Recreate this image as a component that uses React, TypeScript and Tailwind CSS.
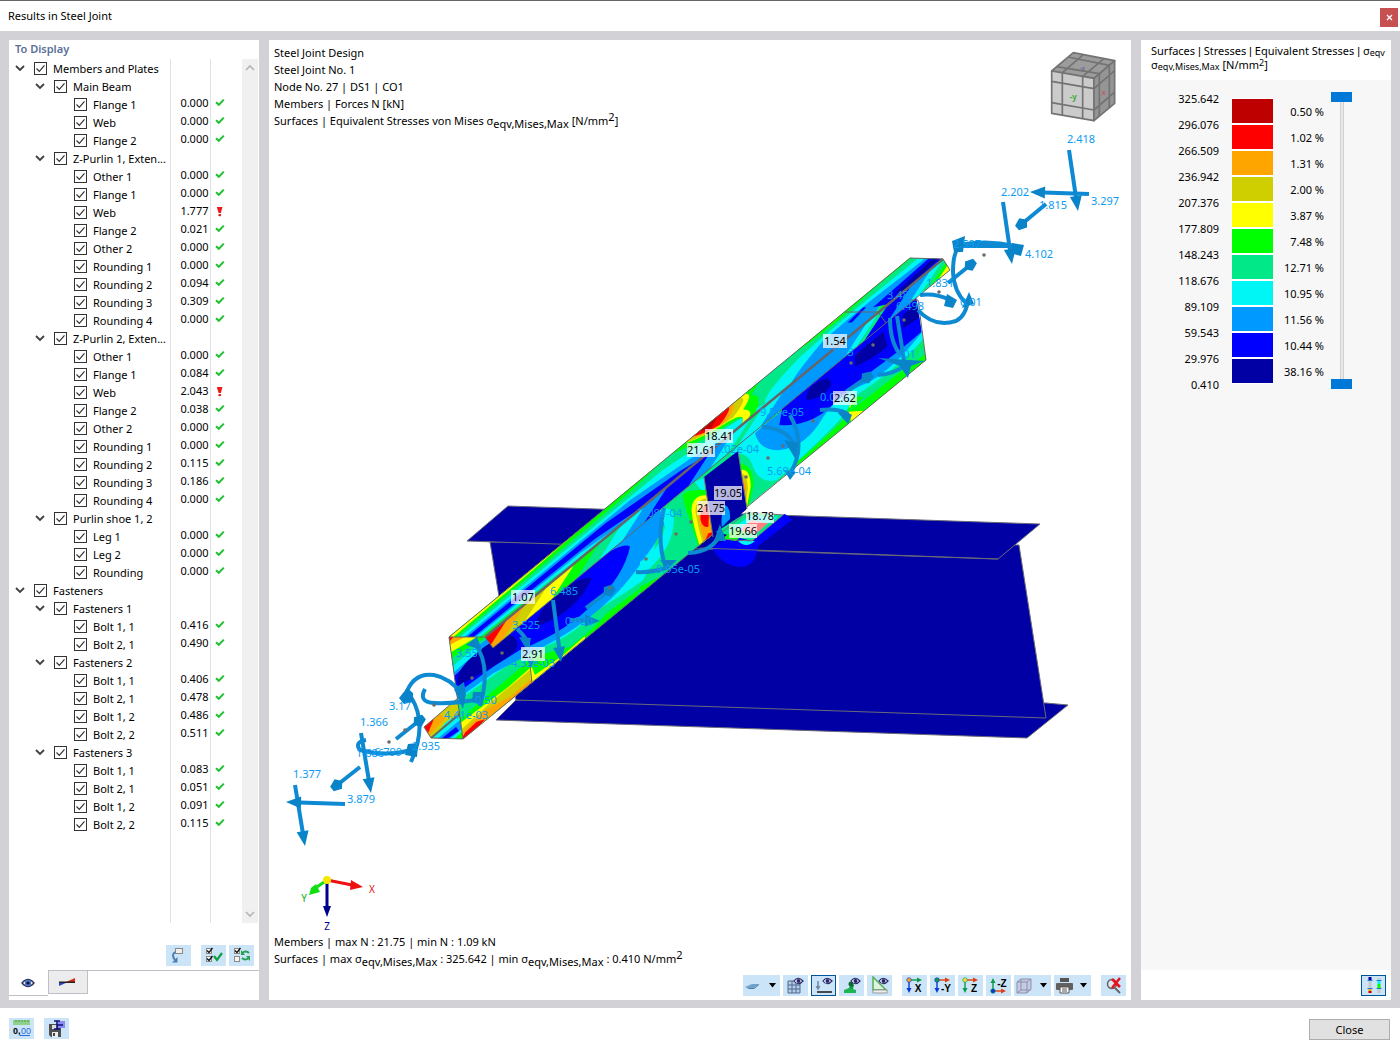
import React from 'react';

type Row = { level: 0 | 1 | 2; label: string; value?: string; bad?: boolean };

const group = (level: 0 | 1, label: string): Row => ({ level, label });
const leaf = (label: string, value: string, bad = false): Row => ({ level: 2, label, value, bad });

const rows: Row[] = [
  group(0, 'Members and Plates'),
  group(1, 'Main Beam'),
  leaf('Flange 1', '0.000'), leaf('Web', '0.000'), leaf('Flange 2', '0.000'),
  group(1, 'Z-Purlin 1, Exten...'),
  leaf('Other 1', '0.000'), leaf('Flange 1', '0.000'), leaf('Web', '1.777', true), leaf('Flange 2', '0.021'),
  leaf('Other 2', '0.000'), leaf('Rounding 1', '0.000'), leaf('Rounding 2', '0.094'), leaf('Rounding 3', '0.309'),
  leaf('Rounding 4', '0.000'),
  group(1, 'Z-Purlin 2, Exten...'),
  leaf('Other 1', '0.000'), leaf('Flange 1', '0.084'), leaf('Web', '2.043', true), leaf('Flange 2', '0.038'),
  leaf('Other 2', '0.000'), leaf('Rounding 1', '0.000'), leaf('Rounding 2', '0.115'), leaf('Rounding 3', '0.186'),
  leaf('Rounding 4', '0.000'),
  group(1, 'Purlin shoe 1, 2'),
  leaf('Leg 1', '0.000'), leaf('Leg 2', '0.000'), leaf('Rounding', '0.000'),
  group(0, 'Fasteners'),
  group(1, 'Fasteners 1'),
  leaf('Bolt 1, 1', '0.416'), leaf('Bolt 2, 1', '0.490'),
  group(1, 'Fasteners 2'),
  leaf('Bolt 1, 1', '0.406'), leaf('Bolt 2, 1', '0.478'), leaf('Bolt 1, 2', '0.486'), leaf('Bolt 2, 2', '0.511'),
  group(1, 'Fasteners 3'),
  leaf('Bolt 1, 1', '0.083'), leaf('Bolt 2, 1', '0.051'), leaf('Bolt 1, 2', '0.091'), leaf('Bolt 2, 2', '0.115'),
];

const indent = ['pl-1', 'pl-6', 'pl-11'];

const NAVY = '#0000a5';
const ROYAL = '#0000ff';
const BLUE = '#0099ff';
const CYAN = '#00f5f5';
const TEAL = '#00e887';
const GREEN = '#00ff00';
const YELLOW = '#ffff00';
const OCHRE = '#cfcf00';
const ORANGE = '#ffa500';
const RED = '#ff0000';
const DARKRED = '#bf0000';

const legend = [
  { color: DARKRED, share: '0.50 %' },
  { color: RED, share: '1.02 %' },
  { color: ORANGE, share: '1.31 %' },
  { color: OCHRE, share: '2.00 %' },
  { color: YELLOW, share: '3.87 %' },
  { color: GREEN, share: '7.48 %' },
  { color: TEAL, share: '12.71 %' },
  { color: CYAN, share: '10.95 %' },
  { color: BLUE, share: '11.56 %' },
  { color: ROYAL, share: '10.44 %' },
  { color: NAVY, share: '38.16 %' },
];
const limits = ['325.642', '296.076', '266.509', '236.942', '207.376', '177.809', '148.243', '118.676', '89.109', '59.543', '29.976', '0.410'];

function Tree() {
  return (
    <table className="w-full table-fixed border-collapse text-[11px] leading-[18px]">
      <colgroup>
        <col className="w-[161px]" />
        <col className="w-10" />
        <col />
      </colgroup>
      <tbody>
        {rows.map((r, i) => (
          <tr key={i} className="h-[18px]">
            <td className="border-r border-[#e3e3e6] p-0">
              <div className={'flex h-[18px] items-center ' + indent[r.level]}>
                <span className="flex w-[21px] shrink-0">
                  {r.level < 2 && (
                    <button aria-label={'Collapse ' + r.label} className="flex h-4 w-[14px] items-center justify-center">
                      <svg width="10" height="7" viewBox="0 0 10 7"><path d="M1 1l4 4 4-4" fill="none" stroke="#404040" strokeWidth="1.8" /></svg>
                    </button>
                  )}
                </span>
                <label className="flex items-center whitespace-nowrap">
                  <span className="relative flex h-[13px] w-[13px] shrink-0">
                    <input type="checkbox" defaultChecked className="peer h-[13px] w-[13px] appearance-none border border-[#333] bg-white" />
                    <svg className="pointer-events-none absolute inset-0 hidden peer-checked:block" width="13" height="13" viewBox="0 0 13 13">
                      <path d="M2.5 6.5l2.8 2.8 5.2-6" fill="none" stroke="#333" strokeWidth="1.2" />
                    </svg>
                  </span>
                  <span className="pl-1.5 pt-px">{r.label}</span>
                </label>
              </div>
            </td>
            <td className="border-r border-[#e3e3e6] p-0">
              <div className="h-[18px] pr-px text-right leading-4">{r.value}</div>
            </td>
            <td className="p-0">
              {r.value && (
                <div className="flex h-[18px] pl-1 pt-[3px]">
                  {r.bad ? (
                    <svg width="9" height="11" viewBox="0 0 9 11"><path d="M1.8 1h5.6L5.9 7H3.6z" fill="#f01818" /><rect x="3.3" y="8" width="2.8" height="2.2" rx="1" fill="#f01818" /></svg>
                  ) : (
                    <svg width="10" height="9" viewBox="0 0 10 9"><path d="M1 4.2l2.8 2.6L8.8 1.6" fill="none" stroke="#22c032" strokeWidth="2" /></svg>
                  )}
                </div>
              )}
            </td>
          </tr>
        ))}
        <tr className="h-[90px]">
          <td className="border-r border-[#e3e3e6]" />
          <td className="border-r border-[#e3e3e6]" />
          <td />
        </tr>
      </tbody>
    </table>
  );
}

const ARROW = '#0d8ad2';

/* Load arrow: a shaft from (x1,y1) with a cone whose tip is at (x2,y2). */
function Arrow({ x1, y1, x2, y2, blunt = false }: { x1: number; y1: number; x2: number; y2: number; blunt?: boolean }) {
  const d = Math.hypot(x2 - x1, y2 - y1);
  const ux = (x2 - x1) / d;
  const uy = (y2 - y1) / d;
  const h = blunt ? 13 : 15;
  const w = 6;
  const bx = x2 - ux * h;
  const by = y2 - uy * h;
  const cone = blunt
    ? `${bx},${by} ${bx + ux * 5 - uy * w},${by + uy * 5 + ux * w} ${x2 - uy * 3},${y2 + ux * 3} ${x2 + uy * 3},${y2 - ux * 3} ${bx + ux * 5 + uy * w},${by + uy * 5 - ux * w}`
    : `${bx - uy * w},${by + ux * w} ${x2},${y2} ${bx + uy * w},${by - ux * w}`;
  return (
    <g>
      <line x1={x1} y1={y1} x2={bx + ux * 2} y2={by + uy * 2} stroke={ARROW} strokeWidth="4" />
      <polygon points={cone} fill="#0a84c8" />
    </g>
  );
}

const forceLabels: [number, number, string][] = [
  [1067, 143, '2.418'], [1001, 196, '2.202'], [1091, 205, '3.297'], [1039, 209, '1.815'], [1025, 258, '4.102'],
  [953, 248, '2.597'], [926, 287, '1.831'], [887, 299, '3.48'], [896, 310, '6.498'], [960, 306, '0.01'],
  [894, 358, '2.01'], [832, 356, '1.03'], [820, 401, '0.020'], [760, 416, '9.54e-05'], [715, 453, '7.02e-04'],
  [767, 475, '5.69e-04'], [638, 517, '7.08e-04'], [656, 573, '9.95e-05'], [550, 595, '6.485'], [565, 625, '0.020'],
  [512, 629, '3.525'], [511, 667, '4.32e-03'], [456, 657, '3.55'], [475, 704, '0.50'], [444, 719, '4.41e-03'],
  [389, 710, '3.17'], [360, 726, '1.366'], [356, 757, '1.686'], [374, 756, '6.799'], [412, 750, '2.935'],
  [293, 778, '1.377'], [347, 803, '3.879'],
];

const valueLabels: [number, number, string][] = [
  [835, 341, '1.54'], [845, 398, '2.62'], [719, 436, '18.41'], [701, 450, '21.61'], [728, 493, '19.05'],
  [711, 508, '21.75'], [760, 516, '18.78'], [743, 531, '19.66'], [523, 597, '1.07'], [533, 654, '2.91'],
];

const nodes: [number, number][] = [
  [984, 255], [939, 292], [904, 320], [873, 345], [851, 363], [813, 421], [783, 446], [768, 458], [746, 477],
  [691, 522], [676, 534], [646, 559], [610, 588], [502, 653], [472, 678], [434, 705], [405, 730], [389, 742],
];

/* Segments of the upper lip, from the lower-left end to the upper-right end. */
const lipBands: [number, number, string][] = [
  [485, 508, RED], [508, 526, ORANGE], [526, 548, OCHRE], [548, 576, YELLOW], [576, 600, GREEN], [600, 622, TEAL],
  [622, 646, CYAN], [646, 668, BLUE], [668, 712, ROYAL], [712, 734, BLUE], [734, 752, CYAN], [752, 762, TEAL],
  [762, 784, CYAN], [784, 868, BLUE], [868, 880, CYAN], [880, 888, TEAL], [888, 912, ROYAL], [912, 932, BLUE],
  [932, 944, CYAN], [944, 954, TEAL], [954, 962, GREEN], [962, 990, YELLOW],
];

function Lip() {
  const top = (x: number) => 637 - ((x - 485) * 378) / 458;
  const low = (x: number) => 648 - ((x - 493) * 378) / 457;
  return (
    <g clipPath="url(#lip)">
      {lipBands.map(([a, b, c], i) => (
        <polygon key={i} fill={c} points={`${a},${top(a)} ${b + 1},${top(b + 1)} ${b - 23},${low(b - 23)} ${a - 24},${low(a - 24)}`} />
      ))}
    </g>
  );
}

function Model() {
  return (
    <svg className="absolute inset-0 h-full w-full" viewBox="269 40 862 960" role="img" aria-label="Stress distribution of the steel joint">
      <defs>
        <clipPath id="web"><polygon points="449,637 910,258 926,360 463,739" /></clipPath>
        <clipPath id="flange"><polygon points="449,637 485,637 943,259 910,258" /></clipPath>
        <clipPath id="lip"><polygon points="485,637 493,648 950,270 943,259" /></clipPath>
        <clipPath id="foot"><polygon points="424,727 458,698 463,739 431,738" /></clipPath>
      </defs>

      {/* main beam */}
      <g fill={NAVY} stroke="#6a6a78" strokeWidth="1">
        <polygon points="516,700 1046,703 1068,705 1027,738 496,720" />
        <polygon points="490,542 1019,545 1046,718 516,700" />
        <polygon points="508,506 1040,524 998,559 467,541" />
      </g>
      <path d="M712 548Q722 566 741 567Q756 566 758 546L792 520L785 514L740 530z" fill={ROYAL} />
      <line x1="700" y1="548" x2="998" y2="559" stroke="#6a6a78" />

      {/* lower flange end of the purlin */}
      <g clipPath="url(#foot)">
        <rect x="420" y="695" width="50" height="50" fill={OCHRE} />
        <polygon points="424,727 440,714 446,718 430,735" fill={ORANGE} />
        <polygon points="424,727 434,719 428,733" fill={RED} />
        <polygon points="432,739 446,722 459,714 463,739" fill={CYAN} />
        <polygon points="437,739 460,720 463,728 450,739" fill={BLUE} />
        <polygon points="441,739 456,727 459,731 447,739" fill={ROYAL} />
        <polygon points="454,739 463,731 463,739" fill={GREEN} />
        <line x1="431" y1="738" x2="462" y2="712" stroke="#666" strokeWidth="2" />
      </g>
      <polygon points="458,698 424,727 431,738 463,739" fill="none" stroke="#666" />

      {/* purlin web */}
      <g clipPath="url(#web)">
        <rect x="440" y="250" width="500" height="500" fill={TEAL} />
        <g transform="translate(410 480) scale(.33333)">
          <path fill={CYAN} d="M110 690L370 512Q480 480 560 390Q640 345 700 300Q735 240 735 190L760 80L600 100L110 500z" />
          <path fill={TEAL} d="M105 720L370 525L365 505L105 690z" />
          <path fill={GREEN} d="M150 717L370 530L480 500Q560 440 590 400L700 318L640 400L150 800z" />
          <path fill={YELLOW} d="M150 730L290 625L365 560L375 585L460 525L525 468L525 500L150 800z" />
          <path fill={OCHRE} d="M150 752L250 660L360 570L365 630L150 800z" />
          <path fill={ORANGE} d="M150 765L225 690L300 650L366 595L366 640L150 800z" />
          <path fill={RED} d="M150 785L165 758L200 725L225 718L160 790z" />
          <path fill={BLUE} d="M120 672L250 580L400 500Q520 440 620 340Q705 250 742 160Q745 110 690 120L450 300L120 560z" />
          <path fill={ROYAL} d="M120 655L250 560L330 510Q480 450 560 360Q640 290 660 200Q640 185 560 240L250 480L130 590z" />
          <path fill={NAVY} d="M145 615Q230 575 315 515Q335 475 300 465Q240 480 200 520Q130 575 145 615z" />
          <path fill={NAVY} d="M375 440Q500 400 545 295Q500 290 440 345Q385 390 375 440z" />
          <path fill={TEAL} d="M110 471H240L200 500L125 560z" />
          <path fill={CYAN} d="M125 560L205 495L215 505L130 578z" />
          <path fill={GREEN} d="M110 471H230L180 500L123 535z" />
          <path fill={YELLOW} d="M115 471H200L120 518z" />
          <path fill={ORANGE} d="M115 471H165L118 495z" />
          <path fill={RED} d="M115 471H130L118 485z" />
        </g>
        <g transform="translate(640 380) scale(.33333)">
          <path fill={BLUE} d="M0 400L60 385Q85 410 70 440Q40 510 0 545z" />
          <path fill={CYAN} d="M60 390Q110 370 100 440Q90 520 0 590L0 545Q60 510 75 440z" />
          <path fill={GREEN} d="M0 620L40 600L60 590L0 650z" />
          <path fill={CYAN} d="M165 305L200 290L195 330Q180 335 165 305z" />
          <path fill={GREEN} d="M180 330Q130 330 128 350Q140 400 160 450L175 500L225 480L215 330z" />
          <path fill={YELLOW} d="M195 345Q152 350 155 395Q160 440 180 500L225 480L215 360z" />
          <path fill={OCHRE} d="M198 355Q162 362 167 400Q175 450 190 495L225 475z" />
          <path fill={ORANGE} d="M200 365Q172 370 176 410Q182 455 195 490L225 475z" />
          <path fill={RED} d="M200 375Q178 380 182 420Q188 445 205 440L208 375z" />
          <path fill={RED} d="M196 480L205 460L225 455L225 475z" />
        </g>
        <g transform="translate(680 250) scale(.33333)">
          <path fill={GREEN} d="M340 645Q430 570 500 500L500 445L545 440Q560 450 600 410Q680 350 738 270V360L340 680z" />
          <path fill={TEAL} d="M500 490Q540 450 600 400Q690 340 738 275V310Q640 380 540 460z" />
          <path fill={YELLOW} d="M505 485L550 482L515 520zM498 450L520 445L510 475z" />
          <path fill={CYAN} d="M150 615Q200 600 215 640Q235 705 290 690Q380 610 450 540Q510 480 520 440Q640 370 735 262L715 200L200 560z" />
          <path fill={BLUE} d="M225 550Q240 605 300 600Q380 590 430 500Q480 430 560 400Q640 360 735 235L715 190L270 510z" />
          <path fill={ROYAL} d="M298 525Q380 530 440 480Q520 410 580 360Q650 310 725 245L712 140L620 200L310 455z" />
          <path fill={NAVY} d="M525 315L610 245L622 290Q580 325 525 350zM380 452Q375 405 440 385Q475 400 420 440zM668 195L710 160L716 205L670 235z" />
          <path fill={GREEN} d="M180 640Q225 650 220 710L205 775L180 790z" />
          <path fill={YELLOW} d="M180 660Q212 655 212 710L200 775L180 790z" />
          <path fill={OCHRE} d="M180 672Q202 665 204 715L196 772L180 780z" />
          <path fill={ORANGE} d="M180 685Q195 680 198 715L193 765z" />
          <path fill={RED} d="M182 700L190 705L192 745L188 755z" />
        </g>
      </g>

      {/* purlin shoe */}
      <polygon points="704,477 738,451 747,509 713,537" fill={NAVY} />
      <path d="M725 505q6 3 5 14l-8 8q-2-10 3-22z" fill={BLUE} />
      <line x1="704" y1="477" x2="713" y2="537" stroke="#777" />
      <line x1="738" y1="451" x2="747" y2="509" stroke="#777" />
      <polygon points="716,532 747,512 783,515 752,541" fill={TEAL} />
      <polygon points="728,532 750,516 778,517 758,530" fill={CYAN} />
      <polygon points="738,530 752,520 768,523 756,534" fill="#ff8080" />
      <polygon points="722,539 735,528 745,532 736,541" fill={GREEN} />
      <path d="M738 541Q746 549 755 541z" fill={CYAN} />
      <path d="M716 537L747 512L783 515L752 541L720 539" fill="none" stroke="#777" />

      {/* purlin top flange, drawn in along/across coordinates */}
      <g clipPath="url(#flange)">
        <g transform="matrix(4.61 -3.79 .35 0 449 637)">
          <rect x="-8" y="-5" width="116" height="115" fill={TEAL} />
          <polygon fill={GREEN} points="-8,-5 50,-5 38,14 -8,24" />
          <polygon fill={YELLOW} points="-8,-5 36,-5 18,7 -8,15" />
          <polygon fill={ORANGE} points="-8,-5 2,-5 -2,14 -8,14" />
          <polygon fill={CYAN} points="-8,32 44,30 56,68 64,100 -8,105" />
          <polygon fill={BLUE} points="-8,44 36,42 47,70 54,105 -8,90" />
          <polygon fill={CYAN} points="-8,74 22,84 32,105 -8,105" />
          <polygon fill={ROYAL} points="-8,52 30,52 44,84 48,105 36,105 26,76 -8,68" />
          <polygon fill={TEAL} points="-8,84 16,92 22,105 -8,105" />
          <polygon fill={GREEN} points="-8,90 12,96 16,105 -8,105" />
          <polygon fill={YELLOW} points="-8,96 8,100 8,105 -8,105" />

          <path fill={GREEN} d="M48-5H68Q66 10 64 20Q64 60 58 105H55Q60 70 56 60Q50 30 48-5z" />
          <path fill={YELLOW} d="M51-5H64Q65 20 60 50Q60 90 56 105H55Q60 70 57 50Q52 30 51-5z" />
          <path fill={OCHRE} d="M51-5H63Q64 20 58 48Q53 40 51-5z" />
          <path fill={ORANGE} d="M52-5H62Q61 20 57 42Q53 30 52-5z" />
          <path fill={RED} d="M53-5H61Q60 18 56 36Q53 20 53-5z" />
          <path fill={DARKRED} d="M54-5H59Q57 10 55 24z" />

          <path fill={CYAN} d="M61 105Q62 60 74 30Q84 18 100 25L108 36V105z" />
          <path fill={BLUE} d="M66 105Q68 80 78 40Q86 30 96 42L108 50V105z" />
          <path fill={GREEN} d="M74-5H106V5L92 4Q86 14 80 10Q76 8 74-5z" />
          <path fill={YELLOW} d="M80-5H86Q84 10 80-5z" />
          <polygon fill={ROYAL} points="83,46 87,38 87,46 83,58" />
          <polygon fill={TEAL} points="84,104 88,72 89,80 86,105" />
          <polygon fill={GREEN} points="85,104 88,80 89,84 86,105" />
          <path fill={ROYAL} d="M87 66L108 48V105H88z" />
          <polygon fill={NAVY} points="90,80 104,62 104,78 92,98" />
        </g>
      </g>
      <Lip />
      <g fill="none" stroke="#666">
        <polyline points="449,637 910,258 943,259 950,270" />
        <path d="M449 637H485L493 648M910 300L918 300L926 360L747 507M713 534L463 739L449 637M493 648L950 270M845 312H878L886 323M530 665L532 683" />
        <path d="M485 637L943 259" strokeWidth="2.5" />
      </g>

      {/* moments and forces */}
      <g fill="none" stroke={ARROW} strokeWidth="4">
        <path d="M405 697Q412 672 434 675Q450 678 462 694" />
        <path d="M425 689Q418 702 434 703Q455 704 480 699" />
        <path d="M411 697Q428 724 411 762" />
        <path d="M366 740Q354 742 360 750Q385 757 412 750" />
        <path d="M1015 246Q990 240 965 244Q953 245 953 272Q954 292 966 303" />
        <path d="M962 246L1012 246" />
        <path d="M920 295Q936 293 950 300M918 310Q934 328 956 321Q966 316 968 300" />
        <path d="M890 318Q890 342 900 354M897 316L904 360M878 375Q894 374 904 366" />
        <path d="M762 427Q788 428 795 447M790 415Q807 446 790 474M820 410Q838 408 848 414" />
        <path d="M664 508Q656 540 666 568Q650 573 636 572M688 553Q714 552 721 532" />
        <path d="M474 643Q492 664 480 706M517 629Q527 637 529 648" />
      </g>
      <g fill="#0a84c8">
        <polygon points="399,698 407,688 413,693 413,702 404,704" />
        <polygon points="454,689 464,682 466,694 463,709" />
        <polygon points="473,692 485,692 481,705 472,702" />
        <polygon points="408,744 418,743 417,757 405,755" />
        <polygon points="952,241 965,236 963,252 954,252" />
        <polygon points="947,294 957,300 953,308 944,306" />
        <polygon points="969,292 974,304 962,308" />
        <polygon points="878,358 925,361 911,366 908,378 900,366" />
        <polygon points="784,440 798,443 796,460" />
        <polygon points="842,409 852,415 848,424 838,413" />
        <polygon points="660,560 677,560 668,569" />
        <polygon points="714,541 720,524 726,541" />
        <polygon points="466,645 477,637 482,650" />
        <polygon points="519,637 531,638 528,652" />
        <polygon points="784,470 796,472 790,480" />
        <polygon points="1012,243 1024,245 1021,256 1010,253" />
        <polygon points="531,668 525,654 534,660" />
      </g>
      <Arrow x1={1069} y1={150} x2={1078} y2={211} />
      <Arrow x1={1089} y1={194} x2={1030} y2={192} />
      <Arrow x1={1003} y1={202} x2={1012} y2={264} />
      <Arrow x1={1046} y1={204} x2={1017} y2={228} blunt />
      <Arrow x1={948} y1={283} x2={975} y2={261} blunt />
      <Arrow x1={846} y1={392} x2={872} y2={374} blunt />
      <Arrow x1={553} y1={600} x2={561} y2={662} />
      <Arrow x1={586} y1={608} x2={614} y2={587} blunt />
      <Arrow x1={570} y1={620} x2={600} y2={621} />
      <Arrow x1={396} y1={739} x2={424} y2={717} blunt />
      <Arrow x1={361} y1={733} x2={371} y2={793} />
      <Arrow x1={360} y1={767} x2={332} y2={789} blunt />
      <Arrow x1={295} y1={785} x2={305} y2={846} />
      <Arrow x1={345} y1={804} x2={286} y2={802} />

      {nodes.map(([x, y]) => <circle key={x} cx={x} cy={y} r="1.8" fill="#6b6b6b" />)}
      <g fill="#0c9bf2" className="text-[11px]">
        {forceLabels.map(([x, y, t]) => <text key={x + '-' + y} x={x} y={y}>{t}</text>)}
      </g>
      <g className="text-[11px]" textAnchor="middle">
        {valueLabels.map(([x, y, t]) => (
          <g key={t}>
            <rect x={x - (t.length > 4 ? 14 : 12)} y={y - 7} width={t.length > 4 ? 28 : 24} height="14" fill="#fff" fillOpacity=".72" />
            <text x={x} y={y + 4}>{t}</text>
          </g>
        ))}
      </g>

      {/* coordinate axes */}
      <line x1="327" y1="880" x2="352" y2="885" stroke="#ee1010" strokeWidth="3" />
      <polygon points="351,880 363,887 350,890" fill="#ee1010" />
      <line x1="327" y1="880" x2="317" y2="887" stroke="#10e010" strokeWidth="3" />
      <polygon points="316,884 320,892 309,895 311,888" fill="#10e010" />
      <line x1="327" y1="880" x2="327" y2="908" stroke="#00008c" strokeWidth="3" />
      <polygon points="323,906 331,906 327,917" fill="#00008c" />
      <circle cx="327" cy="880" r="4" fill="#f3ea00" />
      <g className="text-[10px]" textAnchor="middle">
        <text x="372" y="893" fill="#e01010">X</text>
        <text x="304" y="902" fill="#10b010">Y</text>
        <text x="327" y="930" fill="#00008c">Z</text>
      </g>

      {/* view cube */}
      <g transform="translate(1020 40) scale(.33333)" stroke="#737373" strokeWidth="5" strokeLinejoin="round">
        <polygon points="95,93 160,38 284,62 222,115" fill="#9c9c9c" />
        <polygon points="95,93 222,115 222,242 95,220" fill="#cbcbcb" />
        <polygon points="222,115 284,62 284,190 222,242" fill="#959595" />
        <path d="M127 98V226M188 109V236M95 124L222 146L284 92M95 188L222 210L284 156M238 101V229M268 76V204M110 80L238 101M144 51L268 76M127 98L190 44M188 109L252 56" fill="none" />
        <g stroke="none" textAnchor="middle" fontWeight="bold">
          <text x="160" y="180" fill="#3fae3f" fontSize="24">-y</text>
          <text x="187" y="90" fill="#6868a0" fontSize="18">-z</text>
          <text x="251" y="164" fill="#c06060" fontSize="20">x</text>
        </g>
      </g>
    </svg>
  );
}

function Eye({ x = 0, y = 0 }: { x?: number; y?: number }) {
  return (
    <g transform={`translate(${x} ${y})`}>
      <path d="M0 4Q4-1.500 9 4Q4 9.500 0 4z" fill="#fff" stroke="#27276b" strokeWidth="1.2" />
      <circle cx="4.500" cy="4" r="2" fill="#27276b" />
    </g>
  );
}

function Caret() {
  return <svg width="7" height="5" viewBox="0 0 7 5"><path d="M0 0h7L3.500 4.500z" fill="#000" /></svg>;
}

function Tool({ label, active, wide, children }: { label: string; active?: boolean; wide?: boolean; children: React.ReactNode }) {
  return (
    <button
      aria-label={label}
      className={
        'flex h-[21px] items-center bg-[#cce4f7] ' +
        (wide ? 'w-[37px] justify-between pl-0.5 pr-1 ' : 'w-[25px] justify-center ') +
        (active ? 'border border-[#005499]' : '')
      }
    >
      <svg width="20" height="19" viewBox="0 0 20 19" className="shrink-0">{children}</svg>
      {wide && <Caret />}
    </button>
  );
}

function AxisIcon({ letter, up, dot, h, v }: { letter: string; up?: boolean; dot: string; h: string; v: string }) {
  const y = up ? 15 : 4;
  return (
    <g>
      <path d={`M4 ${y}H13`} stroke={h} strokeWidth="1.4" />
      <path d={`M12 ${y - 2.5}l5 2.5-5 2.5z`} fill={h} />
      <path d={up ? 'M4 15V6' : 'M4 4v9'} stroke={v} strokeWidth="1.4" />
      <path d={up ? 'M1.500 7L4 2l2.500 5z' : 'M1.500 12L4 17l2.500-5z'} fill={v} />
      <circle cx="4" cy={y} r="2.300" fill={dot} stroke={v} strokeWidth=".6" />
      <text x="13" y={up ? 11 : 16} textAnchor="middle" fontSize="10" fontWeight="bold" fontFamily="Liberation Sans">{letter}</text>
    </g>
  );
}

function Toolbar() {
  const blue = '#0838d8';
  const green = '#0a9a4a';
  const red = '#e04010';
  return (
    <div className="flex justify-end gap-2.5 pr-[5px]">
      <div className="flex gap-[3px]">
        <Tool label="Surface display" wide>
          <path d="M0 11l7-3h7l-5 4H4z" fill="#6fa3cb" /><path d="M0 11l4 1h5l5-4v1l-5 4H4z" fill="#4a7ca6" />
        </Tool>
        <Tool label="Show mesh">
          <rect x="2" y="5" width="12" height="12" fill="#b8cde4" /><path d="M2 5v12h12V5zM6 5v12M10 5v12M2 9h12M2 13h12" fill="none" stroke="#4a6a94" />
          <Eye x={8} y={1} />
        </Tool>
        <Tool label="Show loads" active>
          <path d="M4 5v8" stroke="#6d87a4" strokeWidth="1.500" /><path d="M1.500 10L4 14.500 6.500 10z" fill="#6d87a4" /><path d="M3 16h15" stroke="#222" strokeWidth="1.6" />
          <Eye x={9} y={1} />
        </Tool>
        <Tool label="Show supports">
          <path d="M2 17l5-5 2-4 3 1-1 4 3 4z" fill="#169a45" /><path d="M2 14l5-2 7 2v3H2z" fill="#1fb552" /><circle cx="9" cy="8" r="2.500" fill="#0d6e30" />
          <Eye x={9} y={1} />
        </Tool>
        <Tool label="Show dimensions">
          <path d="M3 1v13h13z" fill="#dff2df" stroke="#55b05a" strokeWidth="1.500" /><rect x="3" y="14" width="14" height="3" fill="#eee" stroke="#888" strokeWidth=".8" />
          <Eye x={9} y={1} />
        </Tool>
      </div>
      <div className="flex gap-[3px]">
        <Tool label="View in X"><AxisIcon letter="X" dot="#f5a020" h={green} v={blue} /></Tool>
        <Tool label="View against Y"><AxisIcon letter="-Y" dot={green} h={red} v={blue} /></Tool>
        <Tool label="View in Z"><AxisIcon letter="Z" dot="#f0e040" h={red} v={green} /></Tool>
        <Tool label="View against Z"><AxisIcon letter="-Z" up dot={blue} h={red} v={green} /></Tool>
        <Tool label="Isometric view" wide>
          <path d="M1 6l4-3h10v10l-4 4H1z" fill="#c5cbe4" /><path d="M1 6h10v11H1zM1 6l4-3h10l-4 3M15 3v10l-4 4M5 3v11M5 14h10M5 14l-4 3" fill="none" stroke="#8f8fa8" />
        </Tool>
        <Tool label="Print" wide>
          <path d="M4 2h9v4H4z" fill="#555" /><rect x="0" y="7" width="17" height="7" rx="1" fill="#606060" /><path d="M4 11h9v6H4z" fill="#fff" stroke="#555" /><path d="M6 13h5M6 15h5" stroke="#555" />
        </Tool>
      </div>
      <Tool label="Clear selection">
        <circle cx="8" cy="8" r="4.500" fill="#dfe8ef" stroke="#666" strokeWidth="1.500" /><path d="M11 12l5 5" stroke="#666" strokeWidth="2" /><path d="M8 3l8 8M16 2L8 12" stroke="#e8121c" strokeWidth="2.500" />
      </Tool>
    </div>
  );
}

function Check({ x, y, on = true }: { x: number; y: number; on?: boolean }) {
  return (
    <g transform={`translate(${x} ${y})`}>
      <rect x=".5" y=".5" width="5" height="5" fill="#f5f5f5" stroke="#8a8a8a" />
      {on && <path d="M1 2.500l2 2L6.500 0" fill="none" stroke="#111" strokeWidth="1.300" />}
    </g>
  );
}

const Sub = ({ children }: { children: React.ReactNode }) => <sub className="bottom-[-3px] text-[11px] leading-none">{children}</sub>;
const Sup = ({ children }: { children: React.ReactNode }) => <sup className="top-[-4px] text-[11px] leading-none">{children}</sup>;
const SmallSub = ({ children }: { children: React.ReactNode }) => <sub className="bottom-[-1px] text-[9px] leading-none">{children}</sub>;
const Bar = () => <span className="font-['Liberation_Sans',sans-serif]">|</span>;

export default function App() {
  return (
    <div className="flex min-h-screen flex-col bg-white font-['Noto_Sans',sans-serif] text-[11px] text-black">
      <header className="flex h-[31px] items-center justify-between border-t border-[#666] pl-2 pr-0.5">
        <h1 className="text-[11px]">Results in Steel Joint</h1>
        <button aria-label="Close window" className="mt-0.5 flex h-[19px] w-[18px] items-center justify-center bg-[#c75050]">
          <svg width="7" height="7" viewBox="0 0 7 7"><path d="M1 1l5 5M6 1L1 6" stroke="#fff" strokeWidth="1.300" /></svg>
        </button>
      </header>

      <main className="flex flex-1 gap-2.5 bg-[#d1d1d6] px-[9px] pb-2 pt-[9px]">
        <section className="flex w-[250px] shrink-0 flex-col bg-white">
          <h2 className="h-[19px] pl-1.5 text-[11px] font-semibold leading-[18px] text-[#5a6f98]">To Display</h2>
          <div className="flex flex-1">
            <div className="w-[233px]"><Tree /></div>
            <div className="flex w-4 flex-col justify-between bg-[#f0f0f0] py-1">
              <button aria-label="Scroll up" className="flex h-4 justify-center pt-px"><svg width="10" height="7" viewBox="0 0 10 7"><path d="M1 6l4-4 4 4" fill="none" stroke="#b5b5b5" strokeWidth="1.600" /></svg></button>
              <button aria-label="Scroll down" className="flex h-3 justify-center pt-1"><svg width="10" height="7" viewBox="0 0 10 7"><path d="M1 1l4 4 4-4" fill="none" stroke="#b5b5b5" strokeWidth="1.600" /></svg></button>
            </div>
          </div>
          <div className="flex h-[47px] items-end justify-end gap-[3px] pb-1 pr-[5px]">
            <div className="pr-[7px]">
              <Tool label="Go to object"><rect x="6.500" y="2.500" width="7" height="5" fill="#eee" stroke="#888" /><path d="M6 6Q2 9 6 14" fill="none" stroke="#4a7eb5" strokeWidth="2" /><path d="M8.500 11v5.500H3z" fill="#4a7eb5" /></Tool>
            </div>
            <Tool label="Select all"><Check x={2} y={2} /><Check x={2} y={10} /><path d="M10 10l3 4 5-7" fill="none" stroke="#10a040" strokeWidth="2.200" /></Tool>
            <Tool label="Invert selection"><Check x={2} y={2} /><Check x={2} y={10} on={false} /><path d="M10 7q4-3 7 0M17 12q-4 3-7 0" fill="none" stroke="#28a050" strokeWidth="2" /><path d="M9 4v5h4zM18 15v-5h-4z" fill="#28a050" /></Tool>
          </div>
          <div className="flex h-[30px] items-start">
            <button aria-label="Display" className="flex h-[26px] w-[39px] items-center justify-center border-b border-[#bfbfc8] pr-0.5">
              <svg width="14" height="12" viewBox="0 0 14 12"><path d="M1 6Q7-1 13 6Q7 13 1 6z" fill="#fff" stroke="#333358" strokeWidth="1.300" /><circle cx="7" cy="6" r="3.200" fill="#4a78c8" /><circle cx="7" cy="6" r="1.600" fill="#101030" /></svg>
            </button>
            <button aria-label="Diagrams" className="flex h-6 w-10 items-center justify-center border border-[#bfbfc8] bg-[#ececec] pr-0.5">
              <svg width="16" height="8" viewBox="0 0 16 8"><path d="M0 4h9L0 8z" fill="#2848c8" /><path d="M7 4l9-4v4z" fill="#d83018" /><path d="M0 3.500h16v1.500H0z" fill="#2a2020" /></svg>
            </button>
            <div className="flex-1 border-t border-[#bfbfc8]" />
          </div>
        </section>

        <section className="relative flex min-w-0 flex-1 flex-col justify-between bg-white pb-1 pt-1">
          <Model />
          <div className="relative pl-[5px] text-[11px] leading-[17px]">
            <p>Steel Joint Design</p>
            <p>Steel Joint No. 1</p>
            <p>Node No. 27 | DS1 | CO1</p>
            <p>Members | Forces N [kN]</p>
            <p>Surfaces | Equivalent Stresses von Mises σ<Sub>eqv,Mises,Max</Sub> [N/mm<Sup>2</Sup>]</p>
          </div>
          <div className="relative">
            <div className="pb-2 pl-[5px] text-[11px] leading-[17px]">
              <p>Members | max N : 21.75 | min N : 1.09 kN</p>
              <p>Surfaces | max σ<Sub>eqv,Mises,Max</Sub> : 325.642 | min σ<Sub>eqv,Mises,Max</Sub> : 0.410 N/mm<Sup>2</Sup></p>
            </div>
            <Toolbar />
          </div>
        </section>

        <section className="flex w-[250px] shrink-0 flex-col bg-white">
          <div className="h-10 whitespace-nowrap pl-2.5 pt-1 text-[11px] leading-[13px]">
            <p>Surfaces <Bar /> Stresses <Bar /> Equivalent Stresses <Bar /> σ<SmallSub>eqv</SmallSub></p>
            <p>σ<SmallSub>eqv,Mises,Max</SmallSub> [N/mm<sup className="top-[-3px] text-[9px] leading-none">2</sup>]</p>
          </div>
          <div className="flex flex-1 bg-[#f7f7f7] pt-1.5">
            <div className="w-[78px] text-right leading-[26px]">
              {limits.map((v) => <p key={v}>{v}</p>)}
            </div>
            <div className="ml-[13px] w-[41px] pt-3">
              {legend.map((l) => (
                <div key={l.color} className="h-[26px] border-y border-white"><div className="h-full" style={{ backgroundColor: l.color }} /></div>
              ))}
            </div>
            <div className="w-[51px] pt-[13px] text-right leading-[26px]">
              {legend.map((l) => <p key={l.share}>{l.share}</p>)}
            </div>
            <div className="relative ml-[7px] mt-1.5 flex h-[297px] w-[21px] justify-center">
              <div className="mt-2 w-1 border-x border-[#d0d0d0] bg-[#e8e8e8]" />
              <input type="range" aria-label="Upper limit" defaultValue={0} className="pointer-events-none absolute inset-0 m-0 h-full w-full appearance-none bg-transparent [writing-mode:vertical-lr] [&::-webkit-slider-thumb]:pointer-events-auto [&::-webkit-slider-thumb]:h-2.5 [&::-webkit-slider-thumb]:w-[21px] [&::-webkit-slider-thumb]:appearance-none [&::-webkit-slider-thumb]:bg-[#0078d7]" />
              <input type="range" aria-label="Lower limit" defaultValue={100} className="pointer-events-none absolute inset-0 m-0 h-full w-full appearance-none bg-transparent [writing-mode:vertical-lr] [&::-webkit-slider-thumb]:pointer-events-auto [&::-webkit-slider-thumb]:h-2.5 [&::-webkit-slider-thumb]:w-[21px] [&::-webkit-slider-thumb]:appearance-none [&::-webkit-slider-thumb]:bg-[#0078d7]" />
            </div>
          </div>
          <div className="flex h-[30px] items-end justify-end pb-1 pr-[5px]">
            <Tool label="Color scale settings" active>
              <path d="M6 2v15M15 2v15" stroke="#c8c8c8" strokeWidth="3" />
              <path d="M6 1v3" stroke={NAVY} strokeWidth="3" /><path d="M6 12v3" stroke={ORANGE} strokeWidth="3" /><path d="M6 15v2" stroke={DARKRED} strokeWidth="3" />
              <path d="M15 4v4" stroke={CYAN} strokeWidth="3" /><path d="M15 8v4" stroke={GREEN} strokeWidth="3" />
              <path d="M3.500 4.500h5M3.500 12.500h5M12.500 4.500h5M12.500 12.500h5" stroke="#1080e0" />
            </Tool>
          </div>
        </section>
      </main>

      <footer className="flex h-[42px] items-start justify-between pl-[9px] pr-2.5 pt-2.5">
        <div className="flex gap-2.5">
          <Tool label="Units and decimal places">
            <rect x="1" y="1" width="17" height="5" fill="#8fd08a" /><path d="M4 1v2M7 1v2M10 1v2M13 1v2M16 1v2" stroke="#4a9a4a" />
            <text x="1" y="15" fontSize="9" fontWeight="bold" fontFamily="Liberation Sans">0,</text><text x="9" y="15" fontSize="9" fill="#2a6ae0" fontFamily="Liberation Sans">00</text><path d="M8 16.500h10" stroke="#2a6ae0" />
          </Tool>
          <Tool label="Save as default">
            <path d="M2 5h12v13H4l-2-2z" fill="#505050" /><path d="M5 6h5v4H5z" fill="#ddd" /><path d="M5 13h6v5H5z" fill="#eee" /><path d="M6 14h2v3H6z" fill="#444" />
            <path d="M11 2h7v7h-7z" fill="#8a8af0" /><path d="M7 2h6M7 10h6M10 2v8M10 6h6" stroke="#10107a" strokeWidth="1.600" />
          </Tool>
        </div>
        <button className="mt-px h-[21px] w-[81px] border border-[#adadad] bg-[#e1e1e1] text-[11px] leading-none">Close</button>
      </footer>
    </div>
  );
}
